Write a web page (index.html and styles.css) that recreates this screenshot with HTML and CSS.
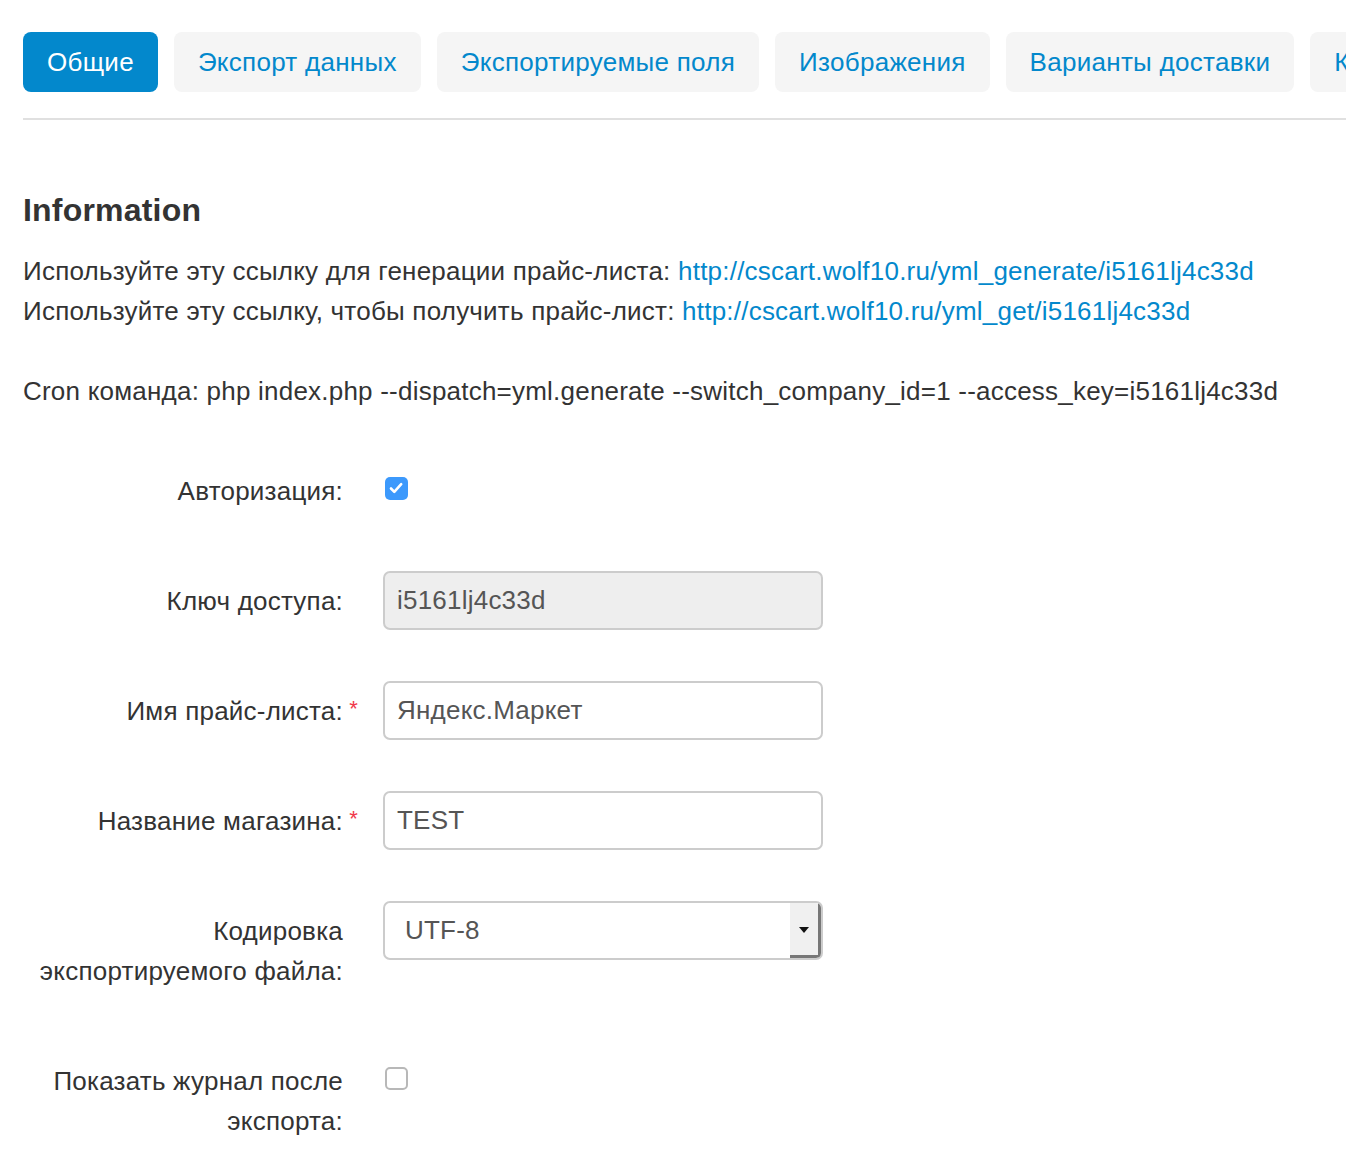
FILE: index.html
```html
<!DOCTYPE html>
<html lang="ru">
<head>
<meta charset="utf-8">
<title>YML</title>
<link rel="stylesheet" href="styles.css">
</head>
<body>
<div class="page">
  <nav class="tabs">
    <a class="tab active">Общие</a>
    <a class="tab">Экспорт данных</a>
    <a class="tab">Экспортируемые поля</a>
    <a class="tab">Изображения</a>
    <a class="tab">Варианты доставки</a>
    <a class="tab">Категории</a>
  </nav>
  <div class="divider"></div>

  <h2 class="title">Information</h2>
  <div class="info">
    <p>Используйте эту ссылку для генерации прайс-листа: <a class="link">http://cscart.wolf10.ru/yml_generate/i5161lj4c33d</a></p>
    <p>Используйте эту ссылку, чтобы получить прайс-лист: <a class="link">http://cscart.wolf10.ru/yml_get/i5161lj4c33d</a></p>
    <p class="blank">&nbsp;</p>
    <p>Cron команда: php index.php --dispatch=yml.generate --switch_company_id=1 --access_key=i5161lj4c33d</p>
  </div>

  <form class="form">
    <div class="row">
      <label class="label">Авторизация:</label>
      <div class="control"><span class="check checked"><svg viewBox="0 0 22 22" width="22" height="22"><path d="M6 11.5l3.3 3.3L16.2 7.2" fill="none" stroke="#fff" stroke-width="2.6" stroke-linecap="round" stroke-linejoin="round"/></svg></span></div>
    </div>
    <div class="row">
      <label class="label">Ключ доступа:</label>
      <div class="control"><div class="input disabled">i5161lj4c33d</div></div>
    </div>
    <div class="row">
      <label class="label req">Имя прайс-листа:</label>
      <div class="control"><div class="input">Яндекс.Маркет</div></div>
    </div>
    <div class="row">
      <label class="label req">Название магазина:</label>
      <div class="control"><div class="input">TEST</div></div>
    </div>
    <div class="row">
      <label class="label">Кодировка экспортируемого файла:</label>
      <div class="control"><div class="select"><span class="select-value">UTF-8</span><span class="select-btn"><span class="arrow"></span></span></div></div>
    </div>
    <div class="row">
      <label class="label">Показать журнал после экспорта:</label>
      <div class="control"><span class="check"></span></div>
    </div>
  </form>
</div>
</body>
</html>
```
FILE: styles.css
```css
html, body {
  margin: 0;
  padding: 0;
  background: #fff;
}
body {
  font-family: "Liberation Sans", Arial, sans-serif;
  font-size: 26px;
  letter-spacing: 0.22px;
  color: #333;
  overflow: hidden;
}
.page {
  padding: 32px 0 0 23px;
}
.tabs {
  display: flex;
  gap: 16px;
  white-space: nowrap;
  overflow: hidden;
}
.tab {
  flex: none;
  display: block;
  height: 60px;
  line-height: 60px;
  padding: 0 24px;
  border-radius: 8px;
  background: #f5f5f5;
  color: #0388cc;
  letter-spacing: 0.28px;
}
.tab.active {
  background: #0388cc;
  color: #fff;
}
.divider {
  margin-top: 26px;
  height: 2px;
  background: #e0e0e0;
}
.title {
  margin: 70px 0 0;
  font-size: 32px;
  line-height: 40px;
  font-weight: bold;
  letter-spacing: 0.2px;
  color: #333;
}
.info {
  margin-top: 21px;
}
.info p {
  margin: 0;
  line-height: 40px;
}
.link {
  color: #0388cc;
}
.form {
  margin-top: 50px;
}
.row {
  display: flex;
  align-items: flex-start;
  min-height: 60px;
  margin-bottom: 50px;
}
.label {
  width: 320px;
  flex: none;
  text-align: right;
  padding: 10px 0;
  line-height: 40px;
  position: relative;
}
.label.req::after {
  content: "*";
  position: absolute;
  right: -15px;
  top: 8px;
  color: #f0394a;
  font-size: 22px;
}
.control {
  margin-left: 40px;
}
.input {
  box-sizing: border-box;
  width: 440px;
  height: 59px;
  border: 2px solid #ccc;
  border-radius: 7px;
  background: #fff;
  padding: 0 12px;
  line-height: 55px;
  color: #555;
}
.input.disabled {
  background: #eee;
}
.select {
  box-sizing: border-box;
  width: 440px;
  height: 59px;
  border: 2px solid #ccc;
  border-radius: 7px;
  background: #fff;
  display: flex;
  overflow: hidden;
}
.select-value {
  flex: 1;
  padding-left: 20px;
  line-height: 55px;
  color: #555;
}
.select-btn {
  width: 28px;
  background: #f0f0f0;
  border-right: 3px solid #777;
  border-bottom: 3px solid #777;
  display: flex;
  align-items: center;
  justify-content: center;
}
.arrow {
  width: 0;
  height: 0;
  border-left: 5px solid transparent;
  border-right: 5px solid transparent;
  border-top: 6px solid #111;
  margin-top: 2px;
}
.check {
  display: block;
  box-sizing: border-box;
  width: 23px;
  height: 23px;
  margin-top: 16px;
  margin-left: 2px;
  border: 2px solid #b8b8b8;
  border-radius: 5px;
  background: #fff;
}
.check.checked {
  border: none;
  background: #3c99fc;
}
.check svg {
  display: block;
}
```
